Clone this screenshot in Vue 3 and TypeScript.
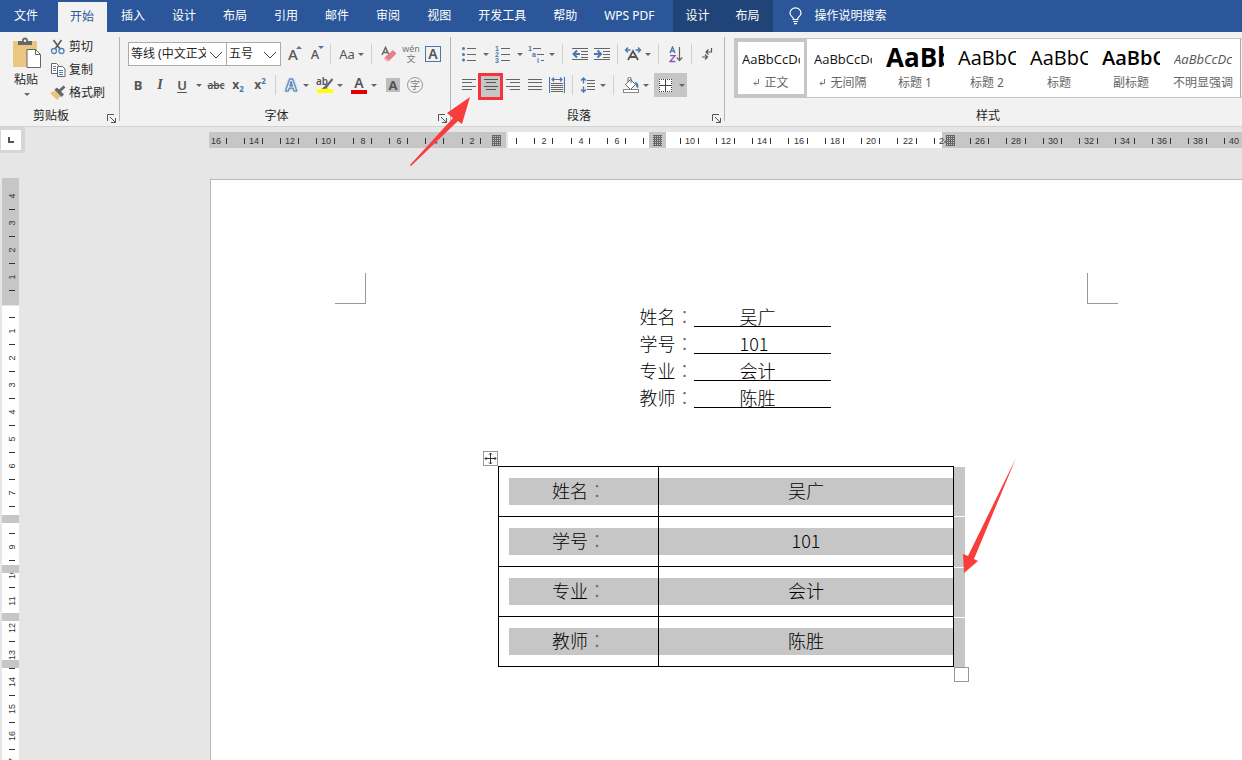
<script setup lang="ts">
interface Tab { name: string; kind?: string }
interface StyleItem { sample: string; name: string; kind: string; mark?: boolean }

const tabs: Tab[] = [
  { name: '文件', kind: 'file' }, { name: '开始', kind: 'active' }, { name: '插入' }, { name: '设计' },
  { name: '布局' }, { name: '引用' }, { name: '邮件' }, { name: '审阅' }, { name: '视图' },
  { name: '开发工具' }, { name: '帮助' }, { name: 'WPS PDF', kind: 'wps' },
  { name: '设计', kind: 'context' }, { name: '布局', kind: 'context' },
]

const styles: StyleItem[] = [
  { sample: 'AaBbCcDc', name: '正文', kind: 'body selected', mark: true },
  { sample: 'AaBbCcDc', name: '无间隔', kind: 'body', mark: true },
  { sample: 'AaBb', name: '标题 1', kind: 'h1' },
  { sample: 'AaBbC', name: '标题 2', kind: 'h2' },
  { sample: 'AaBbC', name: '标题', kind: 'h2' },
  { sample: 'AaBbC', name: '副标题', kind: 'sub' },
  { sample: 'AaBbCcDc', name: '不明显强调', kind: 'weak' },
]

const fields = [
  { label: '姓名', value: '吴广' },
  { label: '学号', value: '101' },
  { label: '专业', value: '会计' },
  { label: '教师', value: '陈胜' },
]

const H_ZERO = 299
const H_UNIT = 18.16
const hx = (n: number): number => Math.round(H_ZERO + n * H_UNIT)
const evens = Array.from({ length: 60 }, (_, i) => i * 2 - 16)
const hNumbers = evens.filter((n) => n !== 0 && n !== 8)
const hTicks = evens
  .flatMap((n) => [n - 0.5, n + 0.5])
  .filter((n) => n > -16 && ![-0.5, 8.5, 24.5].includes(n))
const hMarkers = [283, 444, 737]

const V_ZERO = 126
const V_UNIT = 27
const vNumbers = Array.from({ length: 50 }, (_, i) => i - 4).filter((n) => n !== 0 && n !== 8)
const vTicks = Array.from({ length: 50 }, (_, i) => i - 4 + 0.5)
const vBands = [337, 387, 435, 482]
</script>

<template>
  <div class="app">
    <nav class="tabs">
      <button v-for="(t, i) in tabs" :key="i" type="button" class="tab" :class="t.kind">{{ t.name }}</button>
      <button type="button" class="tell">
        <svg width="13" height="18" viewBox="0 0 13 18" fill="none" stroke="#fff" stroke-width="1.2">
          <path d="M4.2 12.5V11C3 9.8 1 8.5 1 6a5.5 5.2 0 0 1 11 0c0 2.5-2 3.8-3.2 5v1.5z" />
          <path d="M4.2 14.5h4.6M5 16.7h3" />
        </svg>
        操作说明搜索
      </button>
    </nav>

    <div class="ribbon">
      <section class="group">
        <div class="clip">
          <button type="button" class="paste">
            <svg width="30" height="32" viewBox="0 0 30 32">
              <rect x="1" y="4" width="24" height="26" rx="1" fill="#ecc680" />
              <path d="M6 8V4h4a3 3.5 0 0 1 6 0h4v4z" fill="#666" />
              <circle cx="13" cy="3.8" r="1.3" fill="#f2f2f2" />
              <path d="M15 12.5h8.5l5 5V30.5H15z" fill="#fff" stroke="#666" />
              <path d="M23.5 12.5v5h5" fill="none" stroke="#666" />
            </svg>
            <span>粘贴</span>
            <i class="tri"></i>
          </button>
          <div class="clip-list">
            <button type="button">
              <svg width="16" height="16" viewBox="0 0 16 16" fill="none">
                <path d="M3.5 1l6.5 9M11.5 1L5 10" stroke="#5c5c5c" stroke-width="1.7" />
                <circle cx="4" cy="12" r="2.5" stroke="#5382b5" stroke-width="1.3" />
                <circle cx="11.5" cy="12" r="2.5" stroke="#5382b5" stroke-width="1.3" />
              </svg>剪切
            </button>
            <button type="button">
              <svg width="16" height="16" viewBox="0 0 16 16" fill="#fff" stroke="#666">
                <path d="M1.5 1.5h5l2 2v8h-7z" />
                <path d="M3 4.5h3M3 6.5h3M3 8.5h3" stroke="#5382b5" />
                <path d="M7.5 4.5h5l2.5 2.5v7.5H7.5z" />
                <path d="M9 8.5h4M9 10.5h4M9 12.5h4" stroke="#5382b5" />
              </svg>复制
            </button>
            <button type="button">
              <svg width="16" height="16" viewBox="0 0 16 16">
                <path d="M0 8l6-3 5 6-4 4z" fill="#ecc080" />
                <path d="M4.5 4.5L7 2.5l7 7-2.5 2.5z" fill="#666" />
                <path d="M8.5 5l5-4.5 2 2-5 4.5z" fill="#666" />
              </svg>格式刷
            </button>
          </div>
        </div>
        <footer>
          <span>剪贴板</span>
          <button type="button" class="launch" aria-label="剪贴板">
            <svg width="9" height="9" viewBox="0 0 9 9" fill="none" stroke="#555"><path d="M.5 7V.5H7M3 3l5 5M8.5 4v4.5H4" /></svg>
          </button>
        </footer>
      </section>

      <section class="group">
        <div class="row">
          <label class="pick name">
            <select aria-label="字体"><option>等线 (中文正文)</option></select>
            <svg width="14" height="8" viewBox="0 0 14 8" fill="none" stroke="#444"><path d="M1 1l6 6 6-6" /></svg>
          </label>
          <label class="pick size">
            <select aria-label="字号"><option>五号</option></select>
            <svg width="14" height="8" viewBox="0 0 14 8" fill="none" stroke="#444"><path d="M1 1l6 6 6-6" /></svg>
          </label>
          <button type="button" class="b"><span class="letter">A</span><i class="up"></i></button>
          <button type="button" class="b"><span class="letter small">A</span><i class="down"></i></button>
          <span class="sep"></span>
          <button type="button" class="b"><span class="aa">Aa</span></button>
          <button type="button" class="c"><i class="tri"></i></button>
          <span class="sep wide"></span>
          <button type="button" class="b" aria-label="清除格式">
            <svg width="16" height="17" viewBox="0 0 16 17">
              <path d="M1 9L4.5 1.5 8 9M2.3 6.5h4.5" fill="none" stroke="#666" stroke-width="1.5" />
              <path d="M12 4l3.5 3.5L8 15 3.5 11.5z" fill="#e8808c" />
              <path d="M3.5 11.5L8 15l-1.5 1-4-3.5z" fill="#f3b4bb" />
            </svg>
          </button>
          <button type="button" class="b pinyin"><span>wén</span><span>文</span></button>
          <button type="button" class="b"><span class="framed">A</span></button>
        </div>
        <div class="row">
          <button type="button" class="b t-bold">B</button>
          <button type="button" class="b t-italic">I</button>
          <button type="button" class="b t-under">U</button>
          <button type="button" class="c broad"><i class="tri"></i></button>
          <button type="button" class="b t-strike">abc</button>
          <button type="button" class="b t-script">x<sub>2</sub></button>
          <button type="button" class="b t-script">x<sup>2</sup></button>
          <span class="sep"></span>
          <button type="button" class="b"><span class="glow">A</span></button>
          <button type="button" class="c gap"><i class="tri"></i></button>
          <button type="button" class="b">
            <svg width="18" height="18" viewBox="0 0 18 18">
              <text x="0" y="9" class="ab">ab</text>
              <path d="M16.5 3L10 11" stroke="#666" stroke-width="2.2" />
              <path d="M10 9l-4.5 4 6-.5z" fill="#666" />
              <rect x="1" y="13" width="16" height="4" fill="#ff0" />
            </svg>
          </button>
          <button type="button" class="c gap"><i class="tri"></i></button>
          <button type="button" class="b"><span class="colored">A</span></button>
          <button type="button" class="c gap"><i class="tri"></i></button>
          <button type="button" class="b"><span class="shaded">A</span></button>
          <button type="button" class="b"><span class="ring">字</span></button>
        </div>
        <footer>
          <span>字体</span>
          <button type="button" class="launch" aria-label="字体">
            <svg width="9" height="9" viewBox="0 0 9 9" fill="none" stroke="#555"><path d="M.5 7V.5H7M3 3l5 5M8.5 4v4.5H4" /></svg>
          </button>
        </footer>
      </section>

      <section class="group">
        <div class="row">
          <button type="button" class="b" aria-label="项目符号">
            <svg width="16" height="16" viewBox="0 0 16 16">
              <g fill="#4a78ae"><circle cx="2.5" cy="2.5" r="1.5" /><circle cx="2.5" cy="8.5" r="1.5" /><circle cx="2.5" cy="14" r="1.5" /></g>
              <path d="M6 2.5h9M6 8.5h9M6 14.5h9" stroke="#666" />
            </svg>
          </button>
          <button type="button" class="c broad"><i class="tri"></i></button>
          <button type="button" class="b" aria-label="编号">
            <svg width="16" height="17" viewBox="0 0 16 17">
              <g class="num"><text x="0" y="5">1</text><text x="0" y="11">2</text><text x="0" y="17">3</text></g>
              <path d="M6 2.5h9M6 8.5h9M6 14.5h9" stroke="#666" />
            </svg>
          </button>
          <button type="button" class="c broad"><i class="tri"></i></button>
          <button type="button" class="b" aria-label="多级列表">
            <svg width="18" height="17" viewBox="0 0 18 17">
              <g class="num"><text x="0" y="5">1</text><text x="4" y="11">a</text><text x="9" y="17">i</text></g>
              <path d="M5 2.5h8M9 8.5h7M13 14.5h3" stroke="#666" />
            </svg>
          </button>
          <button type="button" class="c"><i class="tri"></i></button>
          <span class="sep wide"></span>
          <button type="button" class="b" aria-label="减少缩进量">
            <svg width="16" height="14" viewBox="0 0 16 14">
              <path d="M0 1.5h16M9 4.5h7M9 7.5h7M9 10.5h7M0 12.5h16" stroke="#666" />
              <path d="M8 7H2M5 3.5L1.5 7 5 10.5" fill="none" stroke="#4a78ae" stroke-width="2" />
            </svg>
          </button>
          <button type="button" class="b" aria-label="增加缩进量">
            <svg width="16" height="14" viewBox="0 0 16 14">
              <path d="M0 1.5h16M9 4.5h7M9 7.5h7M9 10.5h7M0 12.5h16" stroke="#666" />
              <path d="M0 7h6M3.5 3.5L7 7l-3.5 3.5" fill="none" stroke="#4a78ae" stroke-width="2" />
            </svg>
          </button>
          <span class="sep"></span>
          <button type="button" class="b" aria-label="中文版式">
            <svg width="18" height="14" viewBox="0 0 18 14" fill="none">
              <path d="M4 13L9 4l5 9M6 10h6" stroke="#555" stroke-width="1.8" />
              <path d="M6.5 3H2M4 .5L1.5 3 4 5.5M11.5 3H16M14 .5L16.5 3 14 5.5" stroke="#4a78ae" stroke-width="1.4" />
            </svg>
          </button>
          <button type="button" class="c"><i class="tri"></i></button>
          <span class="sep wide"></span>
          <button type="button" class="b" aria-label="排序">
            <svg width="14" height="17" viewBox="0 0 14 17" fill="none">
              <path d="M1 7L3.5 1 6 7M2 5h3" stroke="#4a78ae" stroke-width="1.3" />
              <path d="M1 9.7h5L1 15.5h5.3" stroke="#8b54ad" stroke-width="1.3" />
              <path d="M10.5 1v13M7.8 11.5l2.7 3 2.7-3" stroke="#666" stroke-width="1.2" />
            </svg>
          </button>
          <span class="sep"></span>
          <button type="button" class="b" aria-label="显示编辑标记">
            <svg width="12" height="14" viewBox="0 0 12 14" fill="none" stroke="#555" stroke-width="1.2">
              <path d="M10.5 1v4H5M7.5 2.5L5 5l2.5 2.5M1 10h5M4 7.5L6.5 10 4 12.5" />
            </svg>
          </button>
        </div>
        <div class="row">
          <button type="button" class="b" aria-label="左对齐">
            <svg width="14" height="12" viewBox="0 0 14 12" stroke="#666"><path d="M0 .5h14M0 3.5h10M0 7.5h14M0 10.5h10" /></svg>
          </button>
          <button type="button" class="b on" aria-label="居中">
            <svg width="14" height="12" viewBox="0 0 14 12" stroke="#555"><path d="M0 .5h14M2 3.5h10M0 7.5h14M2 10.5h10" /></svg>
            <span class="callout"></span>
          </button>
          <button type="button" class="b" aria-label="右对齐">
            <svg width="14" height="12" viewBox="0 0 14 12" stroke="#666"><path d="M0 .5h14M4 3.5h10M0 7.5h14M4 10.5h10" /></svg>
          </button>
          <button type="button" class="b" aria-label="两端对齐">
            <svg width="14" height="12" viewBox="0 0 14 12" stroke="#666"><path d="M0 .5h14M0 3.5h14M0 7.5h14M0 10.5h14" /></svg>
          </button>
          <button type="button" class="b" aria-label="分散对齐">
            <svg width="16" height="16" viewBox="0 0 16 16" fill="none">
              <path d="M.5 0v16M15.5 0v16M3 2.5h10M5 .5l-2 2 2 2M11 .5l2 2-2 2" stroke="#4a78ae" stroke-width="1.2" />
              <path d="M2 6.5h12M2 8.5h12M2 10.5h12M2 12.5h12M2 14.5h12" stroke="#666" />
            </svg>
          </button>
          <span class="sep"></span>
          <button type="button" class="b" aria-label="行距">
            <svg width="16" height="16" viewBox="0 0 16 16" fill="none">
              <path d="M3.5 1v5.5M1 3.5L3.5 1 6 3.5M3.5 9.5V15M1 12.5L3.5 15 6 12.5" stroke="#4a78ae" stroke-width="1.4" />
              <path d="M7 3.5h8M7 6.5h8M7 9.5h8M7 12.5h8" stroke="#666" />
            </svg>
          </button>
          <button type="button" class="c"><i class="tri"></i></button>
          <span class="sep wide"></span>
          <button type="button" class="b" aria-label="底纹">
            <svg width="18" height="17" viewBox="0 0 18 17">
              <path d="M8.5 2.5l5 5-5 5-5-5z" fill="#fff" stroke="#666" />
              <path d="M6 5V1.5a1.5 1.5 0 0 1 3 0V6" fill="none" stroke="#666" />
              <path d="M13 5c3 .5 4 3 3 6.5-1-1-2-2-2.5-4z" fill="#4a78ae" />
              <rect x="1.5" y="12.5" width="15" height="3" fill="#fff" stroke="#888" />
            </svg>
          </button>
          <button type="button" class="c gap"><i class="tri"></i></button>
          <button type="button" class="b on" aria-label="边框">
            <svg width="13" height="13" viewBox="0 0 13 13">
              <rect width="13" height="13" fill="#fff" />
              <path d="M0 .5h13M0 12.5h13M.5 0v13M12.5 0v13" stroke="#444" stroke-dasharray="1 1" />
              <path d="M6.5 1v11M1 6.5h11" stroke="#444" />
            </svg>
          </button>
          <button type="button" class="c on"><i class="tri"></i></button>
        </div>
        <footer>
          <span>段落</span>
          <button type="button" class="launch" aria-label="段落">
            <svg width="9" height="9" viewBox="0 0 9 9" fill="none" stroke="#555"><path d="M.5 7V.5H7M3 3l5 5M8.5 4v4.5H4" /></svg>
          </button>
        </footer>
      </section>

      <section class="group styles">
        <div class="gallery">
          <button v-for="(s, i) in styles" :key="i" type="button" class="style" :class="s.kind">
            <span class="sample">{{ s.sample }}</span>
            <span class="style-name">
              <svg v-if="s.mark" width="6" height="7" viewBox="0 0 6 7" fill="none" stroke="#777"><path d="M5.5 0v4.5H1M3 2.5l-2 2 2 2" /></svg>
              {{ s.name }}
            </span>
          </button>
          <span class="more"></span>
        </div>
        <footer><span>样式</span></footer>
      </section>
    </div>

    <div class="ruler-row">
      <button type="button" class="corner" aria-label="制表符">
        <svg width="6" height="6" viewBox="0 0 6 6" fill="none" stroke="#555" stroke-width="2"><path d="M1 0v5h5" /></svg>
      </button>
      <svg class="hruler" height="16">
        <defs>
          <pattern id="mesh" width="2" height="2" patternUnits="userSpaceOnUse">
            <rect width="2" height="2" fill="#666" /><rect width="1" height="1" fill="#c6c6c6" />
          </pattern>
        </defs>
        <rect width="100%" height="16" fill="#c6c6c6" />
        <rect x="297" width="2" height="16" fill="#e6e6e6" />
        <rect x="299" width="434" height="16" fill="#fff" />
        <rect x="440" width="17" height="16" fill="#c6c6c6" />
        <text v-for="n in hNumbers" :key="n" :x="n === -16 ? 7 : hx(n)" y="12">{{ Math.abs(n) }}</text>
        <rect v-for="n in hTicks" :key="n" :x="hx(n) - 1" y="6" width="1" height="6" fill="#333" />
        <rect v-for="m in hMarkers" :key="m" :x="m" y="3" width="9" height="11" fill="url(#mesh)" />
      </svg>
    </div>

    <div class="canvas">
      <div class="vruler">
        <svg width="17" height="100%">
          <rect width="17" height="127" fill="#c6c6c6" />
          <rect y="128" width="17" height="100%" fill="#fff" />
          <g v-for="n in vNumbers" :key="n" :transform="`translate(13 ${V_ZERO + n * V_UNIT}) rotate(-90)`">
            <text>{{ Math.abs(n) }}</text>
          </g>
          <rect v-for="n in vTicks" :key="n" x="7" :y="Math.round(V_ZERO + n * V_UNIT) - 1" width="6" height="1" fill="#333" />
          <rect v-for="y in vBands" :key="y" :y="y" width="17" height="8" fill="#c6c6c6" />
        </svg>
      </div>

      <main class="page">
        <div class="crops"><span class="crop left"></span><span class="crop right"></span></div>
        <div class="doc">
          <dl class="form">
            <div v-for="f in fields" :key="f.label" class="line">
              <dt>{{ f.label }}<span class="colon">：</span></dt>
              <dd>{{ f.value }}</dd>
            </div>
          </dl>
          <div class="table-wrap">
            <span class="move">
              <svg width="13" height="13" viewBox="0 0 13 13" fill="none" stroke="#333">
                <path d="M6.5 1v11M1 6.5h11M5 2.5L6.5 1 8 2.5M5 10.5L6.5 12 8 10.5M2.5 5L1 6.5 2.5 8M10.5 5L12 6.5 10.5 8" />
              </svg>
            </span>
            <table>
              <tbody>
                <tr v-for="f in fields" :key="f.label">
                  <th scope="row"><div>{{ f.label }}<span class="colon">：</span></div></th>
                  <td><div>{{ f.value }}</div></td>
                </tr>
              </tbody>
            </table>
            <div class="row-ends"><span v-for="f in fields" :key="f.label"></span></div>
            <span class="resize"></span>
          </div>
        </div>
      </main>
    </div>

    <svg class="arrow first" width="62" height="70" viewBox="0 0 62 70"><path d="M0 68L43 21l-6-5L60 0 52 27l-4-3L1 69z" fill="#f93c3c" /></svg>
    <svg class="arrow second" width="56" height="116" viewBox="0 0 56 116"><path d="M53 0L5 98 0 96l1 19 14-12-4-2z" fill="#f93c3c" /></svg>
  </div>
</template>

<style>
body { margin: 0; background: #e6e6e6; }
</style>

<style scoped>
.app {
  position: relative;
  display: flex;
  flex-direction: column;
  min-height: 100vh;
  overflow: hidden;
  background: #e6e6e6;
  color: #262626;
  font: 12px/16px "Noto Sans", "Noto Sans CJK SC", sans-serif;
}
button { padding: 0; border: 0; background: none; color: inherit; font: inherit; }
svg { display: block; flex: none; }

.tabs { display: flex; height: 32px; background: #2b579a; color: #fff; }
.tab { flex: none; padding: 0 13px; margin-right: 1px; font-size: 12px; white-space: nowrap; }
.tab.file { padding: 0 14px; margin-right: 6px; }
.tab.active { padding: 0 13px 0 12px; margin-top: 2px; background: #f2f2f2; color: #2b579a; }
.tab.wps { margin-right: 3px; }
.tab.context { margin: 0; background: #214478; }
.tab.wps + .context { margin-left: 2px; }
.tell { display: flex; align-items: center; gap: 13px; margin-left: 16px; white-space: nowrap; }

.ribbon {
  display: grid;
  grid-template-columns: 120px 331px 274px minmax(0, 1fr);
  height: 94px;
  border-bottom: 1px solid #d2d2d2;
  background: #f2f2f2;
}
.group { position: relative; display: flex; flex-direction: column; padding: 10px 0 0 7px; }
.group:not(.styles)::after {
  content: "";
  position: absolute;
  top: 5px;
  right: 0;
  bottom: 5px;
  width: 1px;
  background: #b4b4b4;
}
.group footer { display: flex; align-items: flex-end; margin: auto 1px 2px -8px; text-align: center; }
.group footer span { flex: 1; }
.launch { width: 16px; height: 11px; padding-left: 4px; }

.clip { display: flex; margin-top: -7px; }
.paste { display: flex; flex-direction: column; align-items: center; width: 40px; margin: 2px 3px 0 0; }
.paste span { margin: 3px 2px 5px 0; }
.clip-list button { display: flex; align-items: center; gap: 3px; height: 23px; white-space: nowrap; }

.tri { display: block; border: solid transparent; border-width: 3px 3px 0; border-top-color: #666; }
.row { display: flex; align-items: center; height: 24px; margin-bottom: 7px; }
.b { position: relative; display: flex; flex: none; align-items: center; justify-content: center; width: 22px; height: 24px; color: #555; }
.c { display: flex; flex: none; align-items: center; justify-content: center; width: 8px; height: 24px; }
.c.broad { width: 12px; }
.c.gap { margin-right: 4px; }
.on { background: #c6c6c6; }
.c.on { width: 11px; }
.sep { flex: none; width: 1px; height: 20px; margin: 0 4px; background: #d0d0d0; }
.sep.wide { margin: 0 6px; }

.pick { position: relative; display: block; height: 22px; border: 1px solid #ababab; background: #fff; }
.pick.name { width: 97px; margin-left: 1px; }
.pick.size { width: 53px; margin: 0 1px 0 -1px; }
.pick select {
  display: block;
  width: calc(100% - 20px);
  height: 22px;
  padding: 0 0 0 2px;
  border: 0;
  appearance: none;
  background: none;
  color: #262626;
  font: inherit;
  overflow: hidden;
}
.pick svg { position: absolute; top: 8px; right: 3px; pointer-events: none; }

.letter { font-size: 15px; font-weight: 500; }
.letter.small { font-size: 13px; }
.up, .down { position: absolute; top: 4px; right: 2px; border: solid transparent; }
.up { border-width: 0 3px 3px; border-bottom-color: #4a78ae; }
.down { border-width: 3px 3px 0; border-top-color: #4a78ae; }
.aa { font-size: 13px; margin-left: 2px; }
.pinyin { flex-direction: column; font-size: 9px; line-height: 10px; color: #777; }
.framed { width: 14px; height: 14px; border: 1px solid #4a78ae; font-size: 14px; line-height: 14px; font-weight: 600; }
.t-bold { font-size: 13px; font-weight: 700; }
.t-italic { font: italic 700 14px "Liberation Serif", serif; }
.t-under { font-size: 13px; font-weight: 600; text-decoration: underline; text-underline-offset: 2px; }
.t-strike { font-size: 10px; font-weight: 600; text-decoration: line-through; }
.t-script { font-size: 12px; font-weight: 700; }
.t-script sub, .t-script sup { color: #4a78ae; font-size: 8px; line-height: 8px; }
.t-script sub { margin-top: 8px; }
.t-script sup { margin-bottom: 8px; }
.glow { color: #fff; font-size: 16px; font-weight: 700; -webkit-text-stroke: 1px #4a78ae; text-shadow: 0 0 3px #6fa0d8; }
.ab { fill: #555; font-size: 10px; font-weight: 600; }
.colored { width: 16px; height: 14px; border-bottom: 4px solid #e00000; font-size: 14px; line-height: 14px; font-weight: 600; }
.shaded { width: 14px; height: 14px; background: #bdbdbd; font-size: 13px; line-height: 14px; font-weight: 700; }
.ring { width: 14px; height: 14px; border: 1px solid #999; border-radius: 50%; font-size: 10px; line-height: 14px; color: #777; }
.num { fill: #4a78ae; font: 700 7px "Liberation Sans", sans-serif; }
.callout { position: absolute; inset: 0 -1px -3px -2px; border: 3px solid #f5333a; }

.group.styles { padding: 6px 0 0 9px; }
.gallery { display: flex; height: 58px; border: solid #c6c6c6; border-width: 1px 0 1px 1px; background: #fff; overflow: hidden; }
.style {
  flex: none;
  display: flex;
  flex-direction: column;
  justify-content: center;
  box-sizing: border-box;
  width: 72px;
  padding: 0 3px;
  border: 3px solid transparent;
}
.style.selected { border-color: #c6c6c6; }
.sample { width: 58px; height: 30px; margin: -1px 0 0 1px; overflow: hidden; color: #111; font: 13px/28px "Open Sans", sans-serif; text-align: left; white-space: nowrap; }
.h1 .sample { color: #000; font-size: 26px; line-height: 24px; font-weight: 700; }
.h2 .sample { color: #000; font-size: 20px; line-height: 26px; }
.sub .sample { color: #000; font-size: 20px; line-height: 26px; font-weight: 600; }
.weak .sample { color: #555; font-style: italic; }
.style-name { display: flex; align-items: center; justify-content: center; gap: 5px; color: #666; white-space: nowrap; }
.weak .style-name { margin: 0 -4px; }
.more { flex: 1; margin-left: 1px; border-left: 1px solid #ababab; background: #f2f2f2; }
.group.styles footer { margin: auto 0 2px; }

.ruler-row { display: flex; align-items: flex-start; height: 51px; }
.corner {
  flex: none;
  display: flex;
  align-items: center;
  justify-content: center;
  width: 25px;
  height: 26px;
  border: solid #d6d6d6;
  border-width: 3px 4px 3px 1px;
  background: #fff;
}
.hruler { flex: 1; min-width: 0; margin: 5px 0 0 184px; }
.hruler text, .vruler text { fill: #333; font: 9px "Liberation Sans", sans-serif; text-anchor: middle; }

.canvas { flex: 1; display: flex; }
.vruler { position: relative; flex: none; width: 17px; margin-left: 2px; overflow: hidden; }
.vruler svg { position: absolute; inset: 0; }
.page { flex: 1; margin: 1px 0 0 191px; border: solid #b8b8b8; border-width: 1px 0 0 1px; background: #fff; color: #000; }
.crops { display: flex; justify-content: space-between; width: 783px; margin: 93px 0 0 124px; }
.crop { box-sizing: border-box; width: 31px; height: 31px; border-bottom: 1px solid #999; }
.crop.left { border-right: 1px solid #999; }
.crop.right { border-left: 1px solid #999; }
.doc {
  display: flex;
  flex-direction: column;
  align-items: center;
  width: 720px;
  margin-left: 155px;
  font: 300 18px/25px "Noto Sans CJK SC", sans-serif;
}
.form { margin: 0 0 54px 18px; }
.line { display: flex; height: 27px; }
dt { width: 54px; }
dd { box-sizing: border-box; width: 137px; height: 23px; margin: 0; padding-left: 46px; border-bottom: 1px solid #000; }
.colon { color: #666; font-family: "Noto Sans CJK TC", sans-serif; }
.table-wrap { position: relative; display: flex; margin-right: -11px; }
table { width: 456px; border-collapse: collapse; table-layout: fixed; }
th, td { height: 49px; padding: 0; border: 1px solid #000; font-weight: 300; text-align: center; }
th { width: 159px; }
th div, td div { height: 27px; background: #c6c6c6; }
th div { margin-left: 10px; padding-right: 9px; }
.row-ends { display: flex; flex-direction: column; gap: 1px; width: 11px; padding-top: 1px; }
.row-ends span { flex: 1; background: #c6c6c6; }
.move { position: absolute; top: -15px; left: -15px; width: 13px; height: 13px; border: 1px solid #999; background: #fff; }
.resize { position: absolute; top: 100%; right: -4px; width: 13px; height: 13px; border: 1px solid #999; background: #fff; }

.arrow { position: absolute; pointer-events: none; }
.arrow.first { top: 97px; left: 410px; }
.arrow.second { top: 458px; left: 963px; }
</style>
